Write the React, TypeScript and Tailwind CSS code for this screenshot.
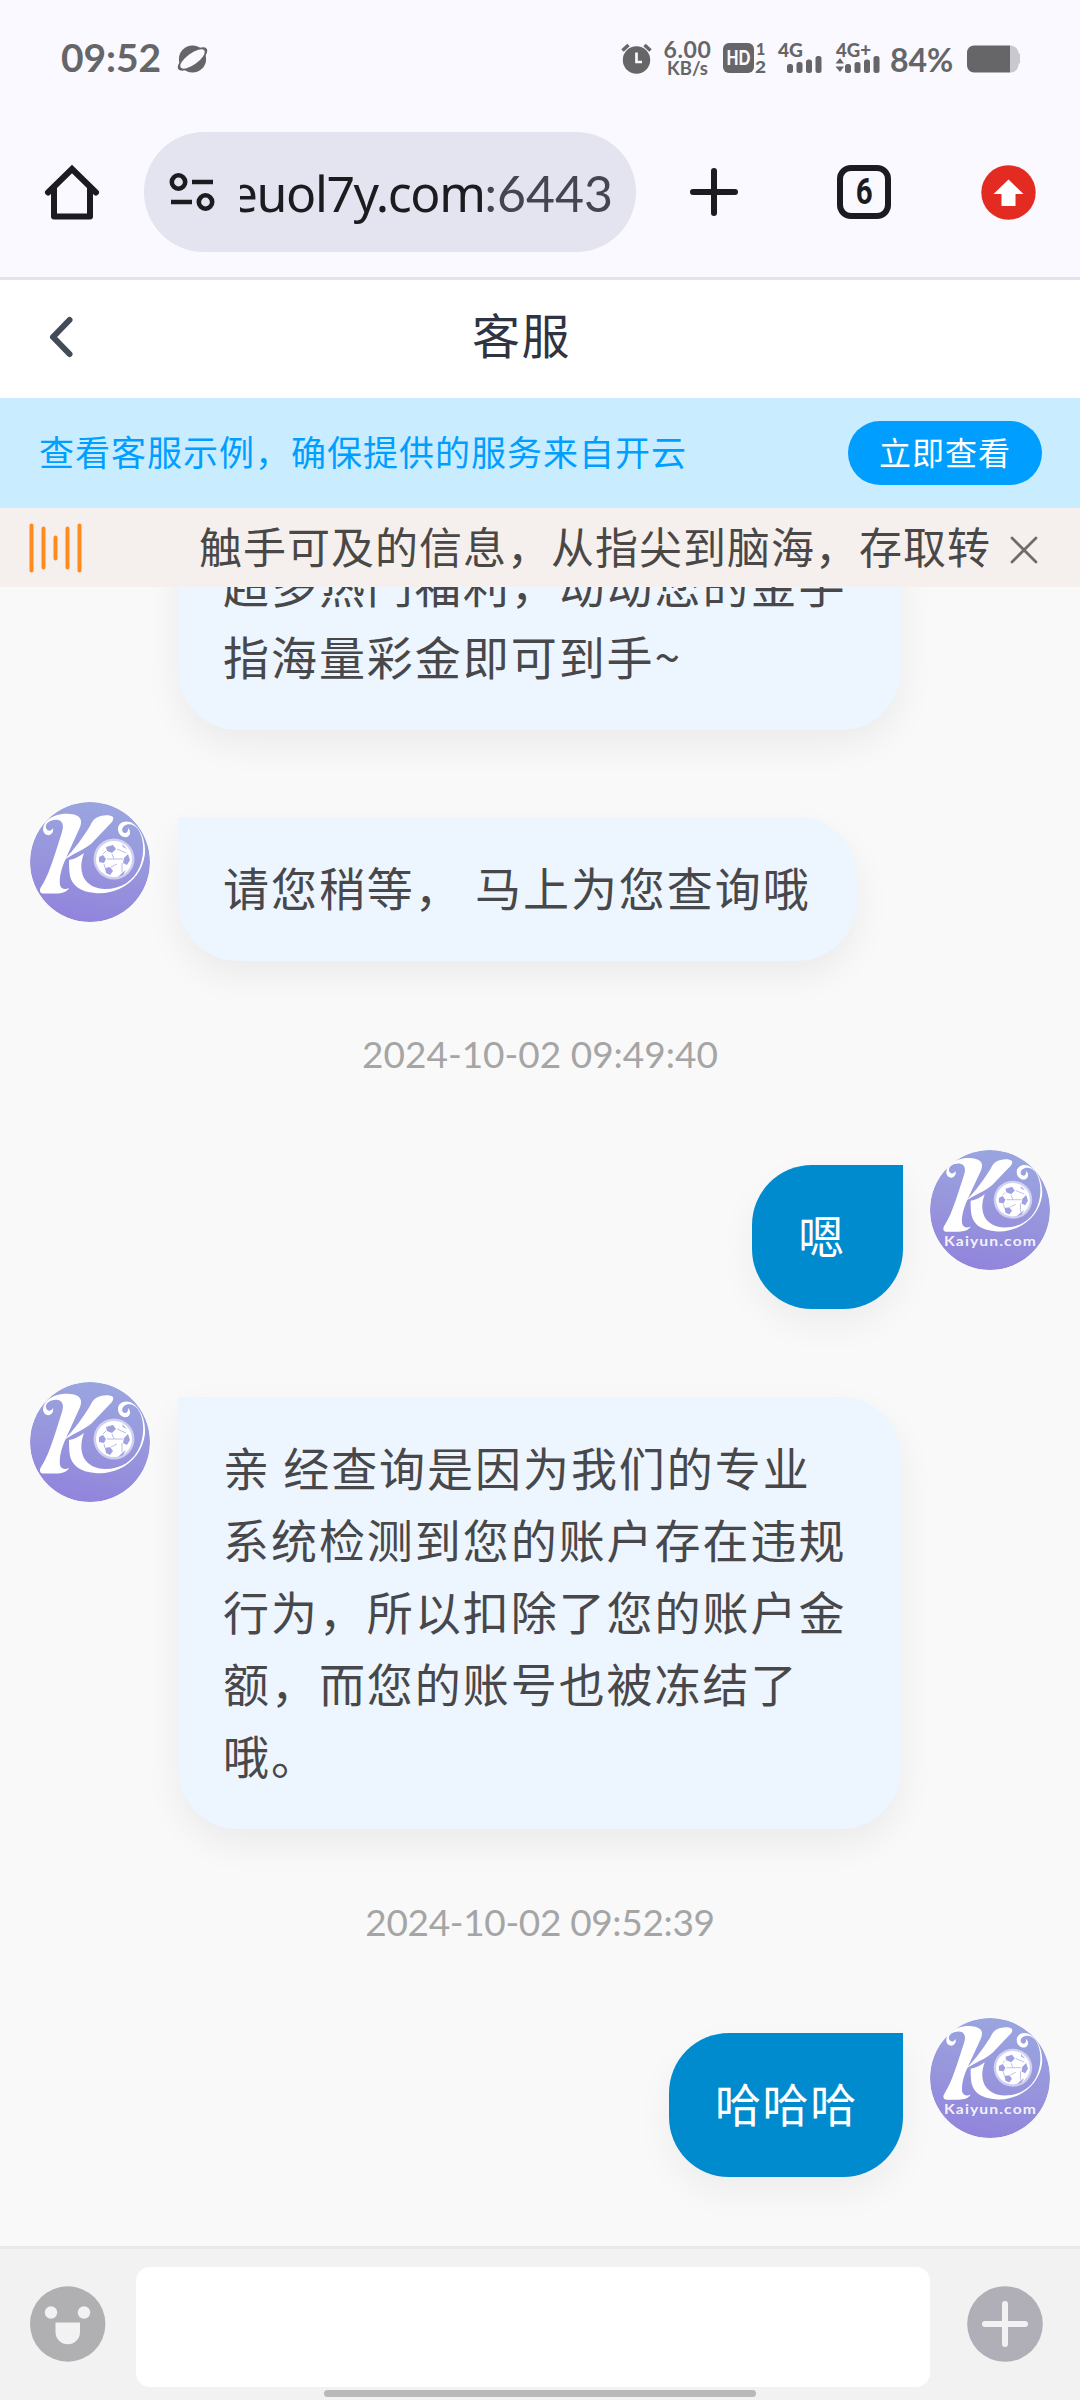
import React from "react";

function Signal({ label, arrows }: { label: string; arrows?: boolean }) {
  return (
    <svg width="47" height="32" viewBox="0 0 47 32" fill="#666668" className="overflow-visible">
      <text x="1" y="15.500" fontSize="19.500" fontWeight="900" fontFamily="Lato, sans-serif" textLength={arrows ? 35 : 25} lengthAdjust="spacingAndGlyphs">
        {label}
      </text>
      <rect x="10" y="23" width="6" height="9" rx="2.500" />
      <rect x="19.500" y="21" width="6" height="11" rx="2.500" />
      <rect x="29" y="18.500" width="6" height="13.500" rx="2.500" />
      <rect x="38.500" y="15" width="6" height="17" rx="2.500" />
      {arrows && <path d="M0.500 22.500 5 17 9 22.500ZM0.500 25.500 5 31 9 25.500Z" />}
    </svg>
  );
}

function StatusBar() {
  return (
    <div className="flex h-[116px] items-center pl-[61px] pr-[59px] text-[#666668] font-[Lato,sans-serif]">
      <span className="-mt-[3px] w-[101px] whitespace-nowrap text-[39px] leading-[40px] font-bold tracking-[-0.1px]">09:52</span>
      <svg className="ml-[15px] mt-[2px]" width="31" height="28" viewBox="0 0 31 28">
        <circle cx="15.500" cy="14" r="13.600" fill="#666668" />
        <ellipse cx="15.500" cy="14" rx="17.500" ry="7" transform="rotate(-36 15.500 14)" fill="#666668" />
        <ellipse cx="15.500" cy="14" rx="14.500" ry="5.600" transform="rotate(-36 15.500 14)" fill="#f9f9ff" />
      </svg>
      <div className="flex-1" />
      <svg width="31" height="31" viewBox="0 0 31 31" fill="#666668">
        <circle cx="15.500" cy="17" r="13.700" />
        <path d="M1.500 7.500 7.500 2M29.500 7.500 23.500 2" stroke="#666668" strokeWidth="3.500" />
        <path d="M15.500 9.500V19H21" fill="none" stroke="#f9f9ff" strokeWidth="2.700" />
      </svg>
      <div className="ml-[11px] flex w-[49px] flex-col items-center gap-px">
        <span className="text-[23px] leading-[20px] font-bold tracking-[0.6px]">6.00</span>
        <span className="text-[18.500px] leading-[17px] font-bold">KB/s</span>
      </div>
      <svg className="ml-[11px] overflow-visible" width="44" height="32" viewBox="0 0 44 32" fill="#666668">
        <rect y="1" width="31" height="30" rx="6" />
        <text x="3.500" y="23" fontSize="20" fontWeight="900" fontFamily="Lato, sans-serif" fill="#f9f9ff" textLength="24" lengthAdjust="spacingAndGlyphs">HD</text>
        <text x="33" y="13" fontSize="16" fontWeight="900" fontFamily="Lato, sans-serif">1</text>
        <text x="32" y="31" fontSize="17" fontWeight="900" fontFamily="Lato, sans-serif" textLength="11" lengthAdjust="spacingAndGlyphs">2</text>
      </svg>
      <div className="ml-[10px] flex gap-[11px] pb-[2px]">
        <Signal label="4G" />
        <Signal label="4G+" arrows />
      </div>
      <span className="ml-[8px] mt-[3px] w-[67px] whitespace-nowrap text-[32px] leading-[32px] font-bold">84%</span>
      <svg className="ml-[10px] mt-[2px]" width="54" height="28" viewBox="0 0 54 28">
        <path d="M43 .5h1a8 8 0 0 1 7.500 8h1.500v10h-1.500a8 8 0 0 1-7.500 9h-1Z" fill="#c9c7cf" />
        <path d="M43 .5v27H7a7 7 0 0 1-7-7v-13a7 7 0 0 1 7-7Z" fill="#666668" />
      </svg>
    </div>
  );
}

function BrowserBar() {
  return (
    <div className="flex h-[164px] items-start border-b-[3px] border-[#e3e2ee] pt-[16px]">
      <svg className="ml-[44px] mt-[32px]" width="56" height="58" viewBox="0 0 56 58" fill="none" stroke="#1c1b20" strokeWidth="6" strokeLinejoin="round" strokeLinecap="round">
        <path d="M4 28.500 28 5 52 28.500" strokeLinejoin="miter" />
        <path d="M10 24V52.500H46V24" />
      </svg>
      <div className="ml-[44px] flex h-[120px] w-[492px] items-center rounded-full bg-[#e4e4f0] pl-[25px] pr-[23px]">
        <svg className="shrink-0" width="46" height="40" viewBox="0 0 46 40" fill="none" stroke="#1c1b20">
          <circle cx="9.500" cy="10" r="6.700" strokeWidth="4.600" />
          <circle cx="36.500" cy="30" r="6.700" strokeWidth="4.600" />
          <path d="M23 10H44M2 30H23" strokeWidth="4.600" />
        </svg>
        <div className="ml-[25px] flex flex-1 justify-end overflow-hidden whitespace-nowrap pt-[2px] text-[50px] leading-[68px] text-[#1c1b20]">
          <span className="tracking-[-1.4px] font-['Noto_Sans',sans-serif]">euol7y.com</span>
          <span className="text-[#45454f] font-[Lato,sans-serif]">:6443</span>
        </div>
      </div>
      <svg className="ml-[53px] mt-[35px]" width="50" height="50" viewBox="0 0 50 50" stroke="#1c1b20" strokeWidth="6" strokeLinecap="round">
        <path d="M25 4V46M4 25H46" />
      </svg>
      <div className="ml-[98px] mt-[33px] flex h-[54px] w-[54px] items-center justify-center rounded-[14px] border-[6px] border-[#1c1b20] text-[36px] leading-none font-bold text-[#1c1b20] font-[Roboto,sans-serif]">
        <span className="scale-x-[.82]">6</span>
      </div>
      <svg className="ml-[90px] mt-[33px]" width="55" height="55" viewBox="0 0 55 55">
        <circle cx="27.500" cy="27.500" r="27.200" fill="#e32b22" />
        <path d="M27.500 14.500 42.500 29H34.500V41H20.500V29H12.500Z" fill="#fff" />
      </svg>
    </div>
  );
}

function PageHeader() {
  return (
    <div className="flex h-[118px] items-center bg-white pl-[48px]">
      <svg className="-mt-[4px]" width="26" height="44" viewBox="0 0 26 44" fill="none" stroke="#434b59" strokeWidth="6" strokeLinecap="round" strokeLinejoin="round">
        <path d="M21.500 5 5 22 21.500 39" />
      </svg>
      <span className="-mt-[12px] ml-[398px] text-[48px] leading-[60px] tracking-[1.5px] text-[#2f3443]">客服</span>
    </div>
  );
}

function Banner() {
  return (
    <div className="flex h-[110px] items-center justify-between bg-[#c9ecff] pl-[39px] pr-[38px]">
      <span className="-mt-[4px] text-[35px] leading-[44px] tracking-[1px] text-[#009fff]">查看客服示例，确保提供的服务来自开云</span>
      <button className="h-[64px] w-[194px] rounded-full bg-[#009fff] pb-[5px] text-[32px] leading-[58px] tracking-[1px] text-white">立即查看</button>
    </div>
  );
}

function Ticker() {
  return (
    <div className="flex h-[79px] items-center bg-[#f5f0ed] pl-[28px]">
      <svg width="56" height="54" viewBox="0 0 56 54" stroke="#ff8a1e" strokeWidth="4" strokeLinecap="round">
        <path d="M3.500 4.500V49.500M15.500 7.500V46.500M27.500 16.500V37.500M39.500 7.500V46.500M51.500 4.500V49.500" />
      </svg>
      <span className="-mt-[6px] ml-[115px] w-[792px] whitespace-nowrap text-[43px] leading-[60px] tracking-[1px] text-[#4a4846]">触手可及的信息，从指尖到脑海，存取转</span>
      <svg className="ml-[19px] mt-[4px]" width="28" height="28" viewBox="0 0 28 28" stroke="#706c6a" strokeWidth="2.800" strokeLinecap="round">
        <path d="M2 2 26 26M26 2 2 26" />
      </svg>
    </div>
  );
}

function Mark() {
  return (
    <g fill="#fff">
      <path d="M17 33C11 31 12 22 19 17C27 11 43 10 49 15C54 20 49 27 46 34L36 56C31 67 29 76 30 83C31 87 35 88 39 86C37 90 32 91.500 26 91.500H13C10 91.500 9 88 11 85C17 76 21 64 25 52L32 30C34 24 33 19 28 18C21 17 15 21 16 26C17 29 21 30 23 26C24 30 21 34 17 33Z" />
      <path d="M66 16C70 13 80 12 83 15C84 18 82 20 79 23L62 41C54 48 42 52 33 59C45 47 53 35 60 24C62 20 63 18 66 16Z" />
      <path d="M39 58C45 57 50 54 54 51C51 59 50 68 54 76C58 83 66 87 75 87C91 87 104 79 110 64C115 51 114 36 108 27C104 22 98 21 94 24C91 27 92 31 95 31C98 31 98 28 98 26C101 29 101 33 97 35C92 36 88 32 88 27C88 21 94 18 100 20C110 24 116 38 115 52C113 68 103 81 89 87C82 90 74 92 65 91C50 90 42 83 40 74C39 69 39 63 39 58Z" />
      <circle cx="84" cy="57" r="20.500" fillOpacity=".55" />
      <circle cx="84" cy="57" r="18" />
      <g fill="#8f90dc" fillOpacity=".85">
        <path d="M76 45 83 43 86 47 82 51 77 49ZM94 56 98 52 100 58 97 63 93 61ZM69 55 73 53 76 57 74 61 69 60ZM75 66 80 65 83 69 80 73 76 71ZM92 71 96 68 93 73 88 75Z" />
        <path d="M92 42 97 47 93 45Z" />
      </g>
      <path d="M82 52 84 57M77 57 84 57 93 57M81 65 87 62M73 52 76 49M87 47 96 51M74 62 75 66M92 61 92 70" stroke="#b9bcec" strokeWidth="1" fill="none" />
    </g>
  );
}

function Avatar({ named }: { named?: boolean }) {
  const id = React.useId();
  return (
    <svg className="shrink-0 rounded-full" width="120" height="120" viewBox="0 0 120 120">
      <defs>
        <linearGradient id={id} x1=".6" y1="0" x2=".4" y2="1">
          <stop offset="0" stopColor="#9aa6e0" />
          <stop offset=".55" stopColor="#9794dc" />
          <stop offset="1" stopColor="#9184dc" />
        </linearGradient>
      </defs>
      <circle cx="60" cy="60" r="60" fill={`url(#${id})`} />
      {named ? (
        <>
          <g transform="translate(4 -3) scale(.94 .925)">
            <Mark />
          </g>
          <text x="14" y="95.500" fontSize="14" fontWeight="700" fill="#fff" fillOpacity=".9" fontFamily="Lato, sans-serif" textLength="93" lengthAdjust="spacingAndGlyphs" letterSpacing="1">Kaiyun.com</text>
        </>
      ) : (
        <Mark />
      )}
    </svg>
  );
}

function AgentBubble({ children }: { children: React.ReactNode }) {
  return (
    <div className="whitespace-pre rounded-[60px] rounded-tl-none bg-[#edf5ff] pl-[45px] pr-[46px] pt-[33px] pb-[39px] text-[46px] leading-[72px] tracking-[1.95px] text-[#48484a] shadow-[0_15px_36px_rgba(0,0,0,0.06)]">
      {children}
    </div>
  );
}

function AgentMessage({ children, wide }: { children: React.ReactNode; wide?: boolean }) {
  return (
    <div className="flex items-start gap-[28px] pl-[30px]">
      <Avatar />
      <div className={wide ? "mt-[15px] w-[723px]" : "mt-[15px]"}>
        <AgentBubble>{children}</AgentBubble>
      </div>
    </div>
  );
}

function UserMessage({ children }: { children: React.ReactNode }) {
  return (
    <div className="flex items-start justify-end gap-[27px] pr-[30px]">
      <div className="mt-[15px] whitespace-pre rounded-[60px] rounded-tr-none bg-[#008bce] pl-[46px] pr-[45px] pt-[33px] pb-[39px] text-[46px] leading-[72px] tracking-[1.7px] text-white shadow-[0_15px_36px_rgba(0,0,0,0.05)]">
        {children}
      </div>
      <Avatar named />
    </div>
  );
}

function Timestamp({ children }: { children: React.ReactNode }) {
  return <div className="pt-[71px] pb-[74px] text-center text-[37px] leading-[44px] text-[#a5a5a5] font-[Lato,sans-serif]">{children}</div>;
}

function Chat() {
  return (
    <div className="flex h-[1659px] flex-col overflow-hidden bg-[#f9f9f9]">
      {/* Message whose upper part has scrolled under the notice strip. */}
      <div className="-mt-[73px] ml-[178px] w-[723px]">
        <AgentBubble>{"超多热门福利，动动您的金手\n指海量彩金即可到手~"}</AgentBubble>
      </div>
      <div className="mt-[72px]">
        <AgentMessage>请您稍等， 马上为您查询哦</AgentMessage>
      </div>
      <Timestamp>2024-10-02 09:49:40</Timestamp>
      <UserMessage>{"嗯 "}</UserMessage>
      <div className="mt-[73px]">
        <AgentMessage wide>{"亲 经查询是因为我们的专业\n系统检测到您的账户存在违规\n行为，所以扣除了您的账户金\n额，而您的账号也被冻结了\n哦。"}</AgentMessage>
      </div>
      <Timestamp>
        <span className="tracking-[-0.35px]">2024-10-02 09:52:39</span>
      </Timestamp>
      <UserMessage>哈哈哈</UserMessage>
    </div>
  );
}

function Composer() {
  return (
    <div className="flex h-[154px] flex-col border-t-[3px] border-[#e9e9e9] bg-[#f2f2f2] pt-[18px]">
      <div className="flex h-[120px] items-center pl-[30px] pr-[37px]">
        <svg className="-mt-[6px]" width="76" height="76" viewBox="0 0 76 76" fill="#f2f2f2">
          <circle cx="37.700" cy="38" r="37.700" fill="#b0b0b2" />
          <circle cx="21" cy="26.500" r="6.200" />
          <circle cx="54" cy="26.500" r="6.200" />
          <path d="M25.500 36.500H50V46a12.200 12.200 0 0 1-24.500 0Z" />
        </svg>
        <div className="ml-[30px] h-[120px] w-[794px] rounded-[14px] bg-white" />
        <svg className="-mt-[6px] ml-[37px]" width="76" height="76" viewBox="0 0 76 76">
          <circle cx="38" cy="38" r="37.800" fill="#b0aeb6" />
          <path d="M38 18V58M18 38H58" stroke="#f2f2f2" strokeWidth="6" strokeLinecap="round" />
        </svg>
      </div>
      <div className="mx-auto mt-[3px] h-[7px] w-[432px] rounded-full bg-[#b9b9b9]" />
    </div>
  );
}

export default function App() {
  return (
    <div className="flex h-[2400px] w-[1080px] flex-col overflow-hidden bg-[#f9f9ff] font-['Noto_Sans_CJK_SC',sans-serif]">
      <StatusBar />
      <BrowserBar />
      <PageHeader />
      <Banner />
      <Ticker />
      <Chat />
      <Composer />
    </div>
  );
}
